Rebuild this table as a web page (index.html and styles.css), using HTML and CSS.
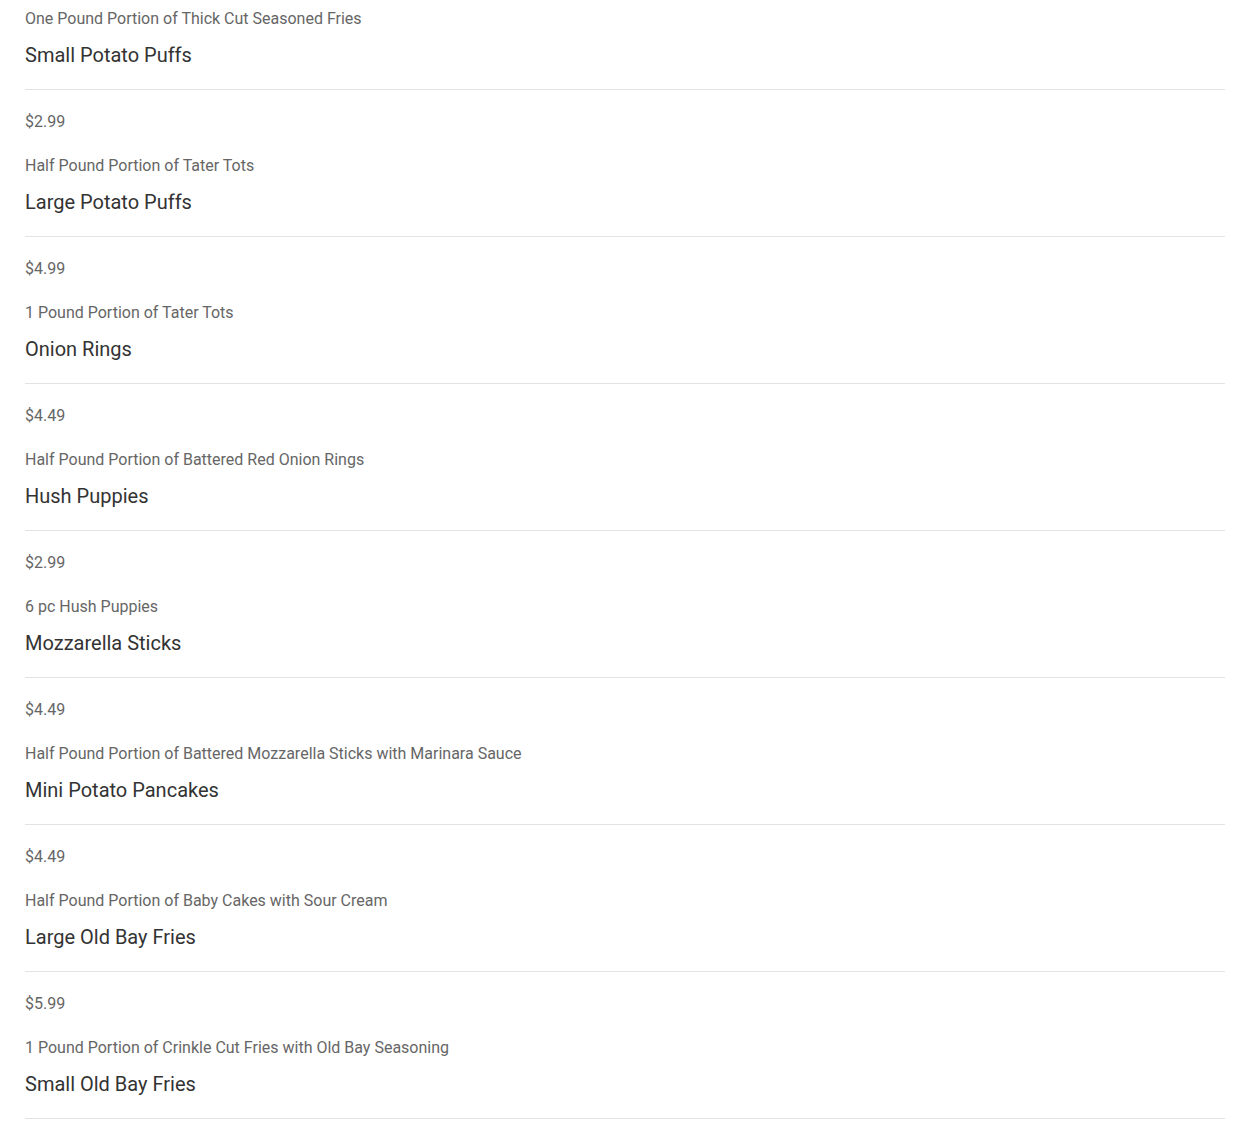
FILE: index.html
```html
<!DOCTYPE html>
<html lang="en">
<head>
    <meta charset="UTF-8">
    <meta name="viewport" content="width=device-width, initial-scale=1.0">
    <title>Sides</title>
    <link rel="stylesheet" href="styles.css">
</head>
<body>
    <div class="menu-list">
        <p class="item-desc">One Pound Portion of Thick Cut Seasoned Fries</p>

        <div class="menu-item">
            <h3 class="item-name">Small Potato Puffs</h3>
            <hr class="item-rule">
            <p class="item-price">$2.99</p>
            <p class="item-desc">Half Pound Portion of Tater Tots</p>
        </div>

        <div class="menu-item">
            <h3 class="item-name">Large Potato Puffs</h3>
            <hr class="item-rule">
            <p class="item-price">$4.99</p>
            <p class="item-desc">1 Pound Portion of Tater Tots</p>
        </div>

        <div class="menu-item">
            <h3 class="item-name">Onion Rings</h3>
            <hr class="item-rule">
            <p class="item-price">$4.49</p>
            <p class="item-desc">Half Pound Portion of Battered Red Onion Rings</p>
        </div>

        <div class="menu-item">
            <h3 class="item-name">Hush Puppies</h3>
            <hr class="item-rule">
            <p class="item-price">$2.99</p>
            <p class="item-desc">6 pc Hush Puppies</p>
        </div>

        <div class="menu-item">
            <h3 class="item-name">Mozzarella Sticks</h3>
            <hr class="item-rule">
            <p class="item-price">$4.49</p>
            <p class="item-desc">Half Pound Portion of Battered Mozzarella Sticks with Marinara Sauce</p>
        </div>

        <div class="menu-item">
            <h3 class="item-name">Mini Potato Pancakes</h3>
            <hr class="item-rule">
            <p class="item-price">$4.49</p>
            <p class="item-desc">Half Pound Portion of Baby Cakes with Sour Cream</p>
        </div>

        <div class="menu-item">
            <h3 class="item-name">Large Old Bay Fries</h3>
            <hr class="item-rule">
            <p class="item-price">$5.99</p>
            <p class="item-desc">1 Pound Portion of Crinkle Cut Fries with Old Bay Seasoning</p>
        </div>

        <div class="menu-item">
            <h3 class="item-name">Small Old Bay Fries</h3>
            <hr class="item-rule">
        </div>
    </div>
</body>
</html>
```

FILE: styles.css
```css
* {
    box-sizing: border-box;
    margin: 0;
    padding: 0;
}

body {
    font-family: Roboto, "Liberation Sans", sans-serif;
    background-color: #fff;
    color: #333;
    overflow: hidden;
}

.menu-list {
    padding: 7px 25px 0;
}

.menu-item {
    margin-top: 10px;
}

.item-name {
    font-size: 20px;
    font-weight: 400;
    line-height: 28px;
    color: #333;
}

.item-rule {
    border: none;
    border-top: 1px solid #e3e3e3;
    margin: 20px 0;
}

.item-price {
    font-size: 16px;
    line-height: 24px;
    color: #666;
    margin-bottom: 20px;
}

.item-desc {
    font-size: 16px;
    line-height: 24px;
    color: #666;
}
```
